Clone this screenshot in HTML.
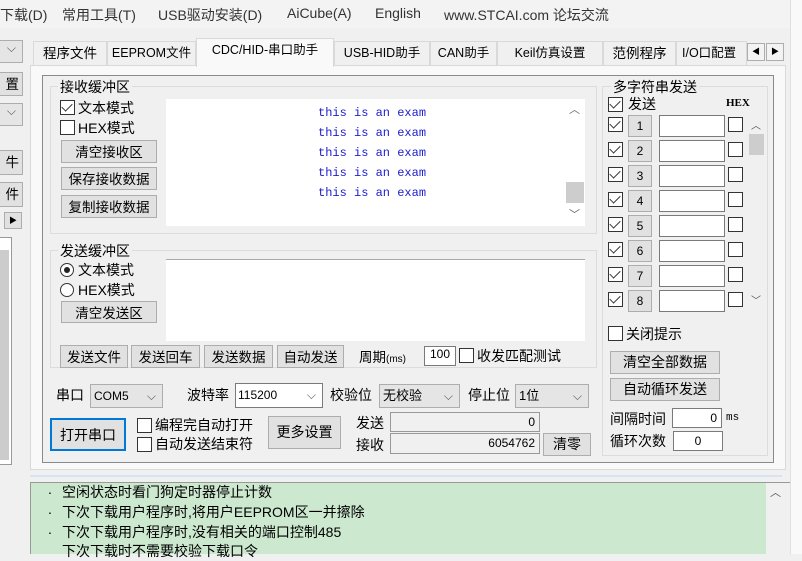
<!DOCTYPE html>
<html><head><meta charset="utf-8"><style>
*{box-sizing:border-box;margin:0;padding:0}
body{width:802px;height:554px;overflow:hidden;background:#f0f0f0;font-family:"Liberation Sans","Noto Sans CJK SC",sans-serif;font-size:13px;color:#000;position:relative}
.a{position:absolute;white-space:nowrap}
.btn{position:absolute;background:#e1e1e1;border:1px solid #adadad;text-align:center;font-size:13.5px}
.inp{position:absolute;background:#fff;border:1px solid #7a7a7a}
.cb{position:absolute;width:15px;height:15px;border:1px solid #333;background:#fff}
.cb.c::after{content:"";position:absolute;left:3px;top:0px;width:5px;height:9px;border:solid #333;border-width:0 1.5px 1.5px 0;transform:rotate(45deg)}
.combo{position:absolute;background:#e5e5e5;border:1px solid #adadad;font-size:12px;padding-left:3px}
.combo::after{content:"⌵";position:absolute;right:6px;top:0;color:#555;font-size:12px}
.grp{position:absolute;border:1px solid #dcdcdc}
.tab{position:absolute;top:41px;height:25px;border:1px solid #d9d9d9;background:#f0f0f0;font-size:13.5px;text-align:center;line-height:23px}
.blue{position:absolute;left:318px;color:#1c1cd0;font-family:"Liberation Mono",monospace;font-size:12px}
.log{position:absolute;left:62px;font-size:14px}
</style></head><body>
<!-- menu -->
<div class="a" style="top:0;left:0;width:802px;height:28px;background:#f3f3f3"></div>
<div class="a" style="top:5px;left:0;font-size:14px;color:#333">下载(D)</div>
<div class="a" style="top:5px;left:62px;font-size:14px;color:#333">常用工具(T)</div>
<div class="a" style="top:5px;left:158px;font-size:14px;color:#333">USB驱动安装(D)</div>
<div class="a" style="top:5px;left:287px;font-size:14px;color:#333">AiCube(A)</div>
<div class="a" style="top:5px;left:375px;font-size:14px;color:#333">English</div>
<div class="a" style="top:5px;left:444px;font-size:14px;color:#333">www.STCAI.com 论坛交流</div>
<div class="a" style="top:0;left:790px;width:12px;height:554px;background:#f9f9f9;border-left:1px solid #e0e0e0"></div>
<!-- left strip -->
<div class="combo" style="left:-10px;top:40px;width:33px;height:23px"></div>
<div class="btn" style="left:-10px;top:72px;width:33px;height:24px;text-align:right;padding-right:3px">置</div>
<div class="combo" style="left:-10px;top:103px;width:33px;height:23px"></div>
<div class="btn" style="left:-10px;top:150px;width:33px;height:25px;text-align:right;padding-right:3px">牛</div>
<div class="btn" style="left:-10px;top:182px;width:33px;height:25px;text-align:right;padding-right:3px">件</div>
<div class="btn" style="left:4px;top:212px;width:18px;height:17px;font-size:8px;line-height:15px">▶</div>
<div class="a" style="left:-2px;top:237px;width:14px;height:228px;background:#fff;border:1px solid #999"></div>
<div class="a" style="left:0;top:250px;width:9px;height:210px;background:#ccc"></div>
<!-- tabs -->
<div class="a" style="left:30px;top:65px;width:756px;height:405px;background:#f9f9f9;border:1px solid #d9d9d9"></div>
<div class="tab" style="left:33px;width:74px">程序文件</div>
<div class="tab" style="left:107px;width:89px;font-size:12.5px">EEPROM文件</div>
<div class="tab" style="left:196px;top:38px;height:29px;width:138px;background:#f9f9f9;border-bottom:none;font-size:12.5px">CDC/HID-串口助手</div>
<div class="tab" style="left:334px;width:96px;font-size:12.5px">USB-HID助手</div>
<div class="tab" style="left:430px;width:67px;font-size:12.5px">CAN助手</div>
<div class="tab" style="left:497px;width:106px;font-size:12.5px">Keil仿真设置</div>
<div class="tab" style="left:603px;width:73px">范例程序</div>
<div class="tab" style="left:676px;width:71px;font-size:12.5px;text-align:left;padding-left:5px;overflow:hidden">I/O口配置</div>
<div class="btn" style="left:747px;top:43px;width:18px;height:18px;font-size:8px;line-height:16px;background:#f3f3f3">◀</div>
<div class="btn" style="left:766px;top:43px;width:18px;height:18px;font-size:8px;line-height:16px;background:#f3f3f3">▶</div>
<div class="a" style="left:42px;top:75px;width:732px;height:388px;background:#f0f0f0;border:1px solid #8a8a8a"></div>
<!-- receive -->
<div class="grp" style="left:50px;top:86px;width:547px;height:148px"></div>
<div class="a" style="left:58px;top:77px;background:#f0f0f0;padding:0 2px;font-size:14px">接收缓冲区</div>
<div class="cb c" style="left:60px;top:100px"></div><div class="a" style="left:78px;top:98px;font-size:14px">文本模式</div>
<div class="cb" style="left:60px;top:120px"></div><div class="a" style="left:78px;top:118px;font-size:14px">HEX模式</div>
<div class="btn" style="left:61px;top:140px;width:96px;height:23px">清空接收区</div>
<div class="btn" style="left:61px;top:167px;width:96px;height:23px">保存接收数据</div>
<div class="btn" style="left:61px;top:195px;width:96px;height:23px">复制接收数据</div>
<div class="a" style="left:166px;top:99px;width:419px;height:127px;background:#fff"></div>
<div class="blue" style="top:106px">this is an exam</div>
<div class="blue" style="top:126px">this is an exam</div>
<div class="blue" style="top:146px">this is an exam</div>
<div class="blue" style="top:166px">this is an exam</div>
<div class="blue" style="top:186px">this is an exam</div>
<div class="a" style="left:566px;top:182px;width:18px;height:21px;background:#cdcdcd"></div>
<div class="a" style="left:569px;top:101px;font-size:11px;color:#666">︿</div>
<div class="a" style="left:569px;top:206px;font-size:11px;color:#666">﹀</div>
<!-- send -->
<div class="grp" style="left:50px;top:250px;width:547px;height:118px"></div>
<div class="a" style="left:58px;top:241px;background:#f0f0f0;padding:0 2px;font-size:14px">发送缓冲区</div>
<div class="a" style="left:60px;top:263px;width:14px;height:14px;border:1px solid #333;border-radius:50%;background:#fff"></div>
<div class="a" style="left:64px;top:267px;width:6px;height:6px;border-radius:50%;background:#222"></div>
<div class="a" style="left:78px;top:260px;font-size:14px">文本模式</div>
<div class="a" style="left:60px;top:283px;width:14px;height:14px;border:1px solid #333;border-radius:50%;background:#fff"></div>
<div class="a" style="left:78px;top:280px;font-size:14px">HEX模式</div>
<div class="btn" style="left:61px;top:301px;width:96px;height:22px">清空发送区</div>
<div class="a" style="left:166px;top:259px;width:419px;height:82px;background:#fff;border-top:1px solid #aaa"></div>
<div class="btn" style="left:60px;top:345px;width:68px;height:23px">发送文件</div>
<div class="btn" style="left:131px;top:345px;width:69px;height:23px">发送回车</div>
<div class="btn" style="left:204px;top:345px;width:69px;height:23px">发送数据</div>
<div class="btn" style="left:277px;top:345px;width:67px;height:23px">自动发送</div>
<div class="a" style="left:359px;top:346px;font-size:13.5px">周期<span style="font-size:10px">(ms)</span></div>
<div class="inp" style="left:424px;top:346px;width:32px;height:20px;font-size:12px;text-align:center">100</div>
<div class="cb" style="left:459px;top:348px"></div>
<div class="a" style="left:477px;top:346px;font-size:14px">收发匹配测试</div>
<!-- port row -->
<div class="a" style="left:56px;top:385px;font-size:14px">串口</div>
<div class="combo" style="left:90px;top:384px;width:73px;height:24px;line-height:22px">COM5</div>
<div class="a" style="left:187px;top:385px;font-size:14px">波特率</div>
<div class="inp" style="left:235px;top:383px;width:88px;height:25px;font-size:12px;line-height:22px;padding-left:2px">115200<span style="position:absolute;right:6px;color:#555">⌵</span></div>
<div class="a" style="left:330px;top:385px;font-size:14px">校验位</div>
<div class="combo" style="left:379px;top:384px;width:81px;height:24px;line-height:22px;font-size:13px">无校验</div>
<div class="a" style="left:468px;top:385px;font-size:14px">停止位</div>
<div class="combo" style="left:515px;top:384px;width:74px;height:24px;line-height:22px;font-size:13px">1位</div>
<div class="btn" style="left:50px;top:418px;width:76px;height:33px;line-height:30px;border:2px solid #0078d7;font-size:14px">打开串口</div>
<div class="cb" style="left:137px;top:418px"></div><div class="a" style="left:155px;top:415px;font-size:14px">编程完自动打开</div>
<div class="cb" style="left:137px;top:437px"></div><div class="a" style="left:155px;top:434px;font-size:14px">自动发送结束符</div>
<div class="btn" style="left:268px;top:416px;width:73px;height:33px;line-height:31px;font-size:14px">更多设置</div>
<div class="a" style="left:356px;top:413px;font-size:14px">发送</div>
<div class="a" style="left:356px;top:435px;font-size:14px">接收</div>
<div class="a" style="left:390px;top:412px;width:150px;height:20px;background:#f0f0f0;border:1px solid #999;text-align:right;padding-right:4px;font-size:12px;line-height:18px">0</div>
<div class="a" style="left:390px;top:433px;width:150px;height:21px;background:#f0f0f0;border:1px solid #999;text-align:right;padding-right:4px;font-size:12px;line-height:19px">6054762</div>
<div class="btn" style="left:543px;top:433px;width:48px;height:23px;font-size:14px">清零</div>
<!-- multi string -->
<div class="grp" style="left:602px;top:86px;width:166px;height:370px"></div>
<div class="a" style="left:611px;top:77px;background:#f0f0f0;padding:0 2px;font-size:14px">多字符串发送</div>
<div class="cb c" style="left:608px;top:97px"></div><div class="a" style="left:628px;top:94px;font-size:14px">发送</div>
<div class="a" style="left:726px;top:97px;font-size:11px;font-family:'Liberation Serif',serif;font-weight:bold">HEX</div>
<div class="a" style="left:749px;top:116px;width:15px;height:193px;background:#f0f0f0"></div>
<div class="a" style="left:749px;top:134px;width:15px;height:21px;background:#cdcdcd"></div>
<div class="a" style="left:751px;top:117px;font-size:10px;color:#555">︿</div>
<div class="a" style="left:751px;top:292px;font-size:10px;color:#555">﹀</div>
<div class="cb c" style="left:608px;top:117px"></div><div class="btn" style="left:628px;top:115px;width:24px;height:22px;font-size:12px;line-height:20px">1</div><div class="inp" style="left:659px;top:115px;width:66px;height:22px"></div><div class="cb" style="left:728px;top:117px"></div>
<div class="cb c" style="left:608px;top:142px"></div><div class="btn" style="left:628px;top:140px;width:24px;height:22px;font-size:12px;line-height:20px">2</div><div class="inp" style="left:659px;top:140px;width:66px;height:22px"></div><div class="cb" style="left:728px;top:142px"></div>
<div class="cb c" style="left:608px;top:167px"></div><div class="btn" style="left:628px;top:165px;width:24px;height:22px;font-size:12px;line-height:20px">3</div><div class="inp" style="left:659px;top:165px;width:66px;height:22px"></div><div class="cb" style="left:728px;top:167px"></div>
<div class="cb c" style="left:608px;top:192px"></div><div class="btn" style="left:628px;top:190px;width:24px;height:22px;font-size:12px;line-height:20px">4</div><div class="inp" style="left:659px;top:190px;width:66px;height:22px"></div><div class="cb" style="left:728px;top:192px"></div>
<div class="cb c" style="left:608px;top:217px"></div><div class="btn" style="left:628px;top:215px;width:24px;height:22px;font-size:12px;line-height:20px">5</div><div class="inp" style="left:659px;top:215px;width:66px;height:22px"></div><div class="cb" style="left:728px;top:217px"></div>
<div class="cb c" style="left:608px;top:242px"></div><div class="btn" style="left:628px;top:240px;width:24px;height:22px;font-size:12px;line-height:20px">6</div><div class="inp" style="left:659px;top:240px;width:66px;height:22px"></div><div class="cb" style="left:728px;top:242px"></div>
<div class="cb c" style="left:608px;top:267px"></div><div class="btn" style="left:628px;top:265px;width:24px;height:22px;font-size:12px;line-height:20px">7</div><div class="inp" style="left:659px;top:265px;width:66px;height:22px"></div><div class="cb" style="left:728px;top:267px"></div>
<div class="cb c" style="left:608px;top:292px"></div><div class="btn" style="left:628px;top:290px;width:24px;height:22px;font-size:12px;line-height:20px">8</div><div class="inp" style="left:659px;top:290px;width:66px;height:22px"></div><div class="cb" style="left:728px;top:292px"></div>
<div class="cb" style="left:608px;top:326px"></div><div class="a" style="left:626px;top:324px;font-size:14px">关闭提示</div>
<div class="btn" style="left:610px;top:351px;width:110px;height:23px;font-size:14px">清空全部数据</div>
<div class="btn" style="left:610px;top:378px;width:110px;height:23px;font-size:14px">自动循环发送</div>
<div class="a" style="left:610px;top:409px;font-size:14px">间隔时间</div>
<div class="inp" style="left:672px;top:408px;width:50px;height:20px;text-align:right;padding-right:4px;font-size:12px;line-height:18px">0</div>
<div class="a" style="left:726px;top:412px;font-size:11px;font-family:'Liberation Mono',monospace">ms</div>
<div class="a" style="left:610px;top:431px;font-size:14px">循环次数</div>
<div class="inp" style="left:673px;top:431px;width:50px;height:20px;text-align:center;font-size:12px;line-height:18px">0</div>
<!-- log -->
<div class="a" style="left:30px;top:475px;width:752px;height:2px;background:#d5e4f0"></div>
<div class="a" style="left:30px;top:482px;width:736px;height:72px;background:#cce8cf;border-left:1px solid #999;border-top:1px solid #999"></div>
<div class="a" style="left:766px;top:482px;width:24px;height:72px;background:#f0f0f0;border-top:1px solid #999"></div>
<div class="a" style="left:770px;top:484px;font-size:11px;color:#555">︿</div>
<div class="a" style="left:48px;top:481px;font-size:14px">.</div><div class="log" style="top:482px">空闲状态时看门狗定时器停止计数</div>
<div class="a" style="left:48px;top:501px;font-size:14px">.</div><div class="log" style="top:502px">下次下载用户程序时,将用户EEPROM区一并擦除</div>
<div class="a" style="left:48px;top:521px;font-size:14px">.</div><div class="log" style="top:522px">下次下载用户程序时,没有相关的端口控制485</div>
<div class="log" style="top:541px">下次下载时不需要校验下载口令</div>
</body></html>
